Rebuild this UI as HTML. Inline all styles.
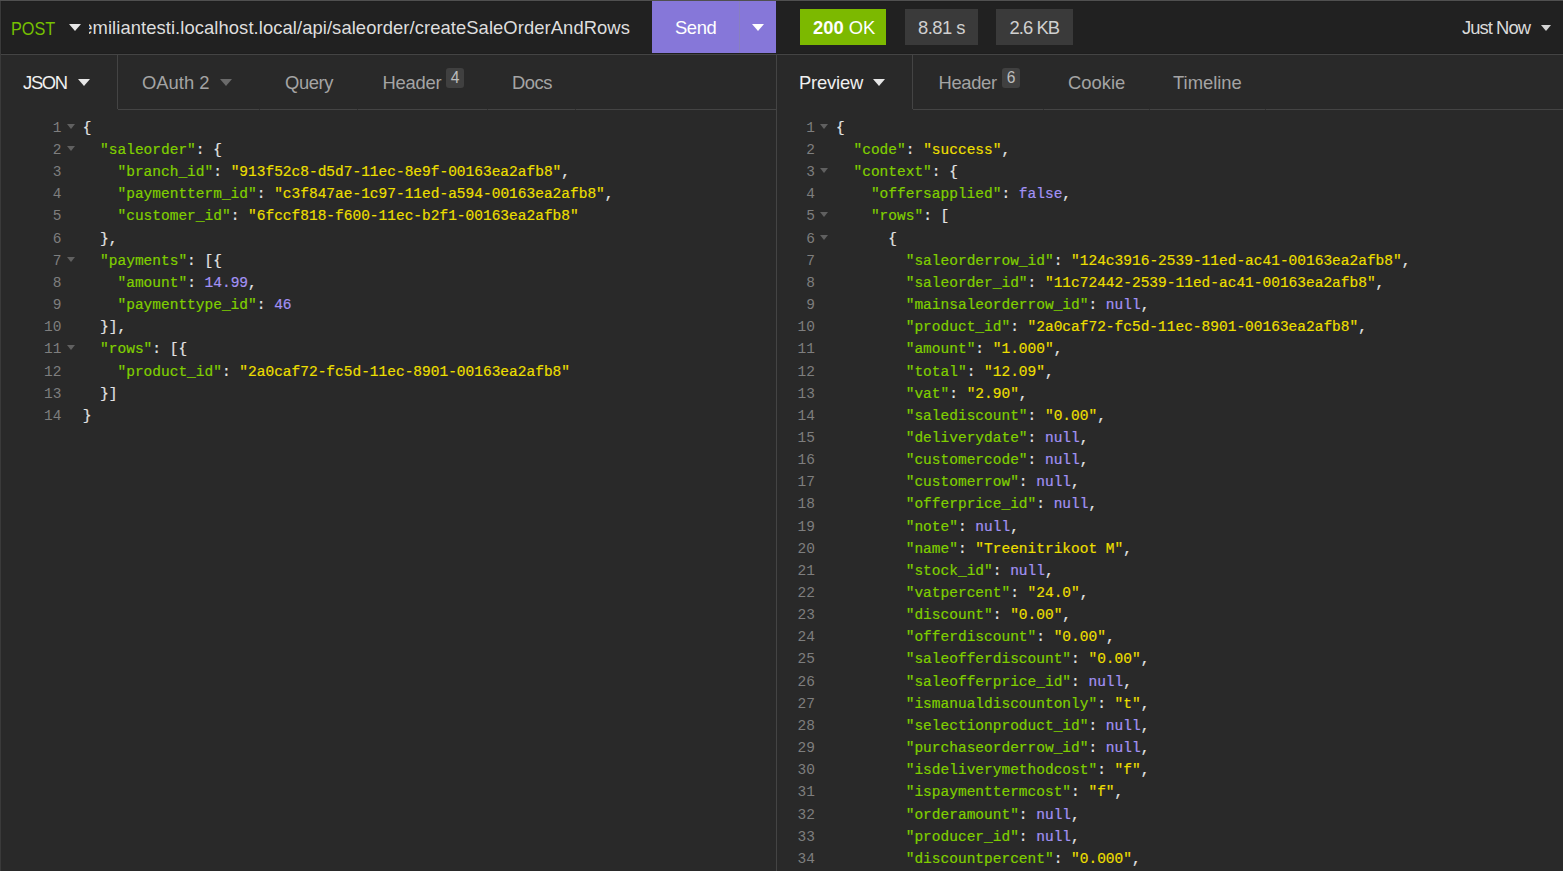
<!DOCTYPE html>
<html><head><meta charset="utf-8">
<style>
*{margin:0;padding:0;box-sizing:border-box}
html,body{width:1563px;height:871px;overflow:hidden;background:#292929}
body{position:relative;font-family:"Liberation Sans",sans-serif}
.a{position:absolute;white-space:pre}
.ui{font-size:18.4px;line-height:22px}
.tri{position:absolute;width:0;height:0;border-left:6px solid transparent;border-right:6px solid transparent;border-top:7px solid #e6e6e6}
.code{position:absolute;top:0;font-family:"Liberation Mono",monospace;font-size:14.515px;line-height:22px;white-space:pre;color:#e4e4e4;-webkit-text-stroke:0.2px currentColor}
.ln{position:absolute;left:0;white-space:pre;height:22px}
.num .ln{left:auto;right:0}
.num{position:absolute;top:0;font-family:"Liberation Mono",monospace;font-size:14.515px;line-height:22px;white-space:pre;color:#7e7e7e;text-align:right}
i{font-style:normal}
.k{color:#80cf00}
.s{color:#ecdf00}
.n{color:#a392f5}
.fold{position:absolute;width:0;height:0;border-left:4px solid transparent;border-right:4px solid transparent;border-top:5px solid #606060}
</style></head><body>
<!-- top bar -->
<div class="a" style="left:0;top:0;width:1563px;height:54px;background:#212121"></div>
<div class="a" style="left:0;top:0;width:1563px;height:1px;background:#505050"></div>
<div class="a" style="left:0;top:54px;width:1563px;height:1px;background:#444"></div>
<div class="a" style="left:0;top:53px;width:1563px;height:1px;background:#1e1e1e"></div>
<div class="a" style="left:0;top:1px;width:1563px;height:1px;background:#1f1f1f"></div>
<div class="a" style="left:1px;top:1px;width:1px;height:53px;background:#1f1f1f"></div>
<div class="a" style="left:0;top:1px;width:1px;height:870px;background:#3a3a3a"></div>
<div class="a" style="left:776px;top:55px;width:1px;height:816px;background:#444"></div>

<div class="a ui" style="left:11px;top:18px;color:#76c000;transform:scaleX(0.884);transform-origin:0 0">POST</div>
<div class="tri" style="left:69px;top:24px"></div>
<div class="a" style="left:89px;top:1px;width:559px;height:53px;overflow:hidden">
  <div class="a ui" style="right:18px;top:16px;color:#dedede;letter-spacing:0.077px">emiliantesti.localhost.local/api/saleorder/createSaleOrderAndRows</div>
</div>

<div class="a" style="left:652px;top:1px;width:124px;height:52px;background:#8677d9"></div>
<div class="a" style="left:739px;top:1px;width:1px;height:52px;background:#8880bf"></div>
<div class="a ui" style="left:675px;top:17px;color:#fff;letter-spacing:-0.43px">Send</div>
<div class="tri" style="left:752px;top:24px;border-top-color:#fff"></div>

<div class="a" style="left:800px;top:9px;width:86px;height:36px;background:#7cb900"></div>
<div class="a ui" style="left:813px;top:17px;color:#fff"><b>200</b> OK</div>
<div class="a" style="left:905px;top:9px;width:73px;height:36px;background:#3a3a3a"></div>
<div class="a ui" style="left:918px;top:17px;color:#d0d0d0;letter-spacing:-0.54px">8.81 s</div>
<div class="a" style="left:996px;top:9px;width:77px;height:36px;background:#3a3a3a"></div>
<div class="a ui" style="left:1009.5px;top:17px;color:#d0d0d0;letter-spacing:-0.94px">2.6 KB</div>
<div class="a ui" style="left:1462px;top:17px;color:#dadada;letter-spacing:-0.95px">Just Now</div>
<div class="tri" style="left:1541px;top:25px;border-top-color:#d4d4d4;border-left-width:5.5px;border-right-width:5.5px;border-top-width:6.5px"></div>

<!-- left tabs -->
<div class="a" style="left:117px;top:55px;width:1px;height:54px;background:#444"></div>
<div class="a" style="left:118px;top:109px;width:658px;height:1px;background:#444"></div>
<div class="a ui" style="left:23px;top:72px;color:#f0f0f0;letter-spacing:-1.3px">JSON</div>
<div class="tri" style="left:78px;top:79px"></div>
<div class="a ui" style="left:142px;top:72px;color:#a4a4a4">OAuth 2</div>
<div class="tri" style="left:220px;top:79px;border-top-color:#6a6a6a"></div>
<div class="a ui" style="left:285px;top:72px;color:#a4a4a4;letter-spacing:-0.4px">Query</div>
<div class="a ui" style="left:382.5px;top:72px;color:#a4a4a4;letter-spacing:-0.25px">Header</div>
<div class="a" style="left:446px;top:68px;width:18px;height:20px;background:#404040;border-radius:3px"></div>
<div class="a" style="left:446px;top:68px;width:18px;height:20px;font-size:15.6px;line-height:20px;text-align:center;color:#bdbdbd">4</div>
<div class="a ui" style="left:512px;top:72px;color:#a4a4a4;letter-spacing:-0.47px">Docs</div>

<!-- right tabs -->
<div class="a" style="left:912px;top:55px;width:1px;height:54px;background:#444"></div>
<div class="a" style="left:913px;top:109px;width:650px;height:1px;background:#444"></div>
<div class="a ui" style="left:799px;top:72px;color:#f0f0f0;letter-spacing:-0.2px">Preview</div>
<div class="tri" style="left:873px;top:79px"></div>
<div class="a ui" style="left:938.5px;top:72px;color:#a4a4a4;letter-spacing:-0.35px">Header</div>
<div class="a" style="left:1002px;top:68px;width:18px;height:20px;background:#404040;border-radius:3px"></div>
<div class="a" style="left:1002px;top:68px;width:18px;height:20px;font-size:15.6px;line-height:20px;text-align:center;color:#bdbdbd">6</div>
<div class="a ui" style="left:1068px;top:72px;color:#a4a4a4">Cookie</div>
<div class="a ui" style="left:1173px;top:72px;color:#a4a4a4">Timeline</div>

<div class="a" style="left:259px;top:109px;width:1px;height:1px;background:#313131"></div><div class="a" style="left:357px;top:109px;width:1px;height:1px;background:#313131"></div><div class="a" style="left:487px;top:109px;width:1px;height:1px;background:#313131"></div><div class="a" style="left:575px;top:109px;width:1px;height:1px;background:#313131"></div><div class="a" style="left:1043px;top:109px;width:1px;height:1px;background:#313131"></div><div class="a" style="left:1149px;top:109px;width:1px;height:1px;background:#313131"></div><div class="a" style="left:1265px;top:109px;width:1px;height:1px;background:#313131"></div>
<!-- left code -->
<div class="num" style="left:30px;width:31.5px"><div class="ln" style="top:117px">1</div><div class="ln" style="top:139px">2</div><div class="ln" style="top:161px">3</div><div class="ln" style="top:183px">4</div><div class="ln" style="top:205px">5</div><div class="ln" style="top:228px">6</div><div class="ln" style="top:250px">7</div><div class="ln" style="top:272px">8</div><div class="ln" style="top:294px">9</div><div class="ln" style="top:316px">10</div><div class="ln" style="top:338px">11</div><div class="ln" style="top:361px">12</div><div class="ln" style="top:383px">13</div><div class="ln" style="top:405px">14</div></div>
<div class="fold" style="left:67px;top:124px"></div>
<div class="fold" style="left:67px;top:146px"></div>
<div class="fold" style="left:67px;top:257px"></div>
<div class="fold" style="left:67px;top:345px"></div>
<div class="code" style="left:82.7px"><div class="ln" style="top:117px">{</div><div class="ln" style="top:139px">  <i class="k">&quot;saleorder&quot;</i>: {</div><div class="ln" style="top:161px">    <i class="k">&quot;branch_id&quot;</i>: <i class="s">&quot;913f52c8-d5d7-11ec-8e9f-00163ea2afb8&quot;</i>,</div><div class="ln" style="top:183px">    <i class="k">&quot;paymentterm_id&quot;</i>: <i class="s">&quot;c3f847ae-1c97-11ed-a594-00163ea2afb8&quot;</i>,</div><div class="ln" style="top:205px">    <i class="k">&quot;customer_id&quot;</i>: <i class="s">&quot;6fccf818-f600-11ec-b2f1-00163ea2afb8&quot;</i></div><div class="ln" style="top:228px">  },</div><div class="ln" style="top:250px">  <i class="k">&quot;payments&quot;</i>: [{</div><div class="ln" style="top:272px">    <i class="k">&quot;amount&quot;</i>: <i class="n">14.99</i>,</div><div class="ln" style="top:294px">    <i class="k">&quot;paymenttype_id&quot;</i>: <i class="n">46</i></div><div class="ln" style="top:316px">  }],</div><div class="ln" style="top:338px">  <i class="k">&quot;rows&quot;</i>: [{</div><div class="ln" style="top:361px">    <i class="k">&quot;product_id&quot;</i>: <i class="s">&quot;2a0caf72-fc5d-11ec-8901-00163ea2afb8&quot;</i></div><div class="ln" style="top:383px">  }]</div><div class="ln" style="top:405px">}</div></div>

<!-- right code -->
<div class="num" style="left:780px;width:35px"><div class="ln" style="top:117px">1</div><div class="ln" style="top:139px">2</div><div class="ln" style="top:161px">3</div><div class="ln" style="top:183px">4</div><div class="ln" style="top:205px">5</div><div class="ln" style="top:228px">6</div><div class="ln" style="top:250px">7</div><div class="ln" style="top:272px">8</div><div class="ln" style="top:294px">9</div><div class="ln" style="top:316px">10</div><div class="ln" style="top:338px">11</div><div class="ln" style="top:361px">12</div><div class="ln" style="top:383px">13</div><div class="ln" style="top:405px">14</div><div class="ln" style="top:427px">15</div><div class="ln" style="top:449px">16</div><div class="ln" style="top:471px">17</div><div class="ln" style="top:493px">18</div><div class="ln" style="top:516px">19</div><div class="ln" style="top:538px">20</div><div class="ln" style="top:560px">21</div><div class="ln" style="top:582px">22</div><div class="ln" style="top:604px">23</div><div class="ln" style="top:626px">24</div><div class="ln" style="top:648px">25</div><div class="ln" style="top:671px">26</div><div class="ln" style="top:693px">27</div><div class="ln" style="top:715px">28</div><div class="ln" style="top:737px">29</div><div class="ln" style="top:759px">30</div><div class="ln" style="top:781px">31</div><div class="ln" style="top:804px">32</div><div class="ln" style="top:826px">33</div><div class="ln" style="top:848px">34</div></div>
<div class="fold" style="left:820px;top:124px"></div>
<div class="fold" style="left:820px;top:168px"></div>
<div class="fold" style="left:820px;top:212px"></div>
<div class="fold" style="left:820px;top:235px"></div>
<div class="code" style="left:836.1px"><div class="ln" style="top:117px">{</div><div class="ln" style="top:139px">  <i class="k">&quot;code&quot;</i>: <i class="s">&quot;success&quot;</i>,</div><div class="ln" style="top:161px">  <i class="k">&quot;context&quot;</i>: {</div><div class="ln" style="top:183px">    <i class="k">&quot;offersapplied&quot;</i>: <i class="n">false</i>,</div><div class="ln" style="top:205px">    <i class="k">&quot;rows&quot;</i>: [</div><div class="ln" style="top:228px">      {</div><div class="ln" style="top:250px">        <i class="k">&quot;saleorderrow_id&quot;</i>: <i class="s">&quot;124c3916-2539-11ed-ac41-00163ea2afb8&quot;</i>,</div><div class="ln" style="top:272px">        <i class="k">&quot;saleorder_id&quot;</i>: <i class="s">&quot;11c72442-2539-11ed-ac41-00163ea2afb8&quot;</i>,</div><div class="ln" style="top:294px">        <i class="k">&quot;mainsaleorderrow_id&quot;</i>: <i class="n">null</i>,</div><div class="ln" style="top:316px">        <i class="k">&quot;product_id&quot;</i>: <i class="s">&quot;2a0caf72-fc5d-11ec-8901-00163ea2afb8&quot;</i>,</div><div class="ln" style="top:338px">        <i class="k">&quot;amount&quot;</i>: <i class="s">&quot;1.000&quot;</i>,</div><div class="ln" style="top:361px">        <i class="k">&quot;total&quot;</i>: <i class="s">&quot;12.09&quot;</i>,</div><div class="ln" style="top:383px">        <i class="k">&quot;vat&quot;</i>: <i class="s">&quot;2.90&quot;</i>,</div><div class="ln" style="top:405px">        <i class="k">&quot;salediscount&quot;</i>: <i class="s">&quot;0.00&quot;</i>,</div><div class="ln" style="top:427px">        <i class="k">&quot;deliverydate&quot;</i>: <i class="n">null</i>,</div><div class="ln" style="top:449px">        <i class="k">&quot;customercode&quot;</i>: <i class="n">null</i>,</div><div class="ln" style="top:471px">        <i class="k">&quot;customerrow&quot;</i>: <i class="n">null</i>,</div><div class="ln" style="top:493px">        <i class="k">&quot;offerprice_id&quot;</i>: <i class="n">null</i>,</div><div class="ln" style="top:516px">        <i class="k">&quot;note&quot;</i>: <i class="n">null</i>,</div><div class="ln" style="top:538px">        <i class="k">&quot;name&quot;</i>: <i class="s">&quot;Treenitrikoot M&quot;</i>,</div><div class="ln" style="top:560px">        <i class="k">&quot;stock_id&quot;</i>: <i class="n">null</i>,</div><div class="ln" style="top:582px">        <i class="k">&quot;vatpercent&quot;</i>: <i class="s">&quot;24.0&quot;</i>,</div><div class="ln" style="top:604px">        <i class="k">&quot;discount&quot;</i>: <i class="s">&quot;0.00&quot;</i>,</div><div class="ln" style="top:626px">        <i class="k">&quot;offerdiscount&quot;</i>: <i class="s">&quot;0.00&quot;</i>,</div><div class="ln" style="top:648px">        <i class="k">&quot;saleofferdiscount&quot;</i>: <i class="s">&quot;0.00&quot;</i>,</div><div class="ln" style="top:671px">        <i class="k">&quot;saleofferprice_id&quot;</i>: <i class="n">null</i>,</div><div class="ln" style="top:693px">        <i class="k">&quot;ismanualdiscountonly&quot;</i>: <i class="s">&quot;t&quot;</i>,</div><div class="ln" style="top:715px">        <i class="k">&quot;selectionproduct_id&quot;</i>: <i class="n">null</i>,</div><div class="ln" style="top:737px">        <i class="k">&quot;purchaseorderrow_id&quot;</i>: <i class="n">null</i>,</div><div class="ln" style="top:759px">        <i class="k">&quot;isdeliverymethodcost&quot;</i>: <i class="s">&quot;f&quot;</i>,</div><div class="ln" style="top:781px">        <i class="k">&quot;ispaymenttermcost&quot;</i>: <i class="s">&quot;f&quot;</i>,</div><div class="ln" style="top:804px">        <i class="k">&quot;orderamount&quot;</i>: <i class="n">null</i>,</div><div class="ln" style="top:826px">        <i class="k">&quot;producer_id&quot;</i>: <i class="n">null</i>,</div><div class="ln" style="top:848px">        <i class="k">&quot;discountpercent&quot;</i>: <i class="s">&quot;0.000&quot;</i>,</div></div>
</body></html>
